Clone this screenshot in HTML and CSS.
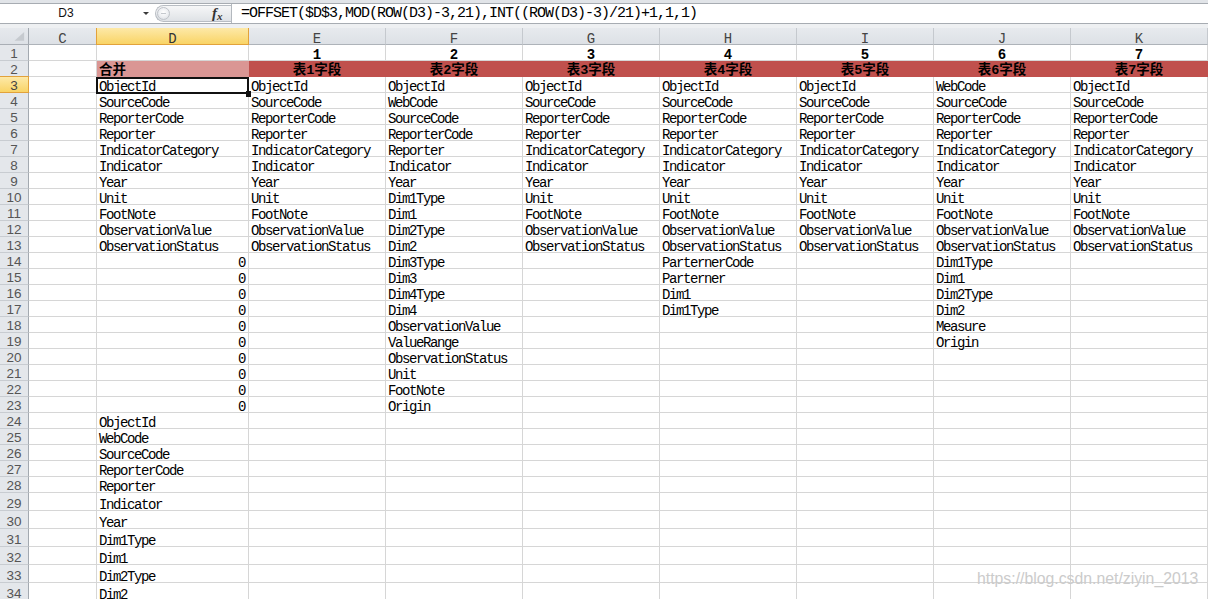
FILE: index.html
```html
<!DOCTYPE html>
<html lang="zh">
<head>
<meta charset="utf-8">
<title>Excel</title>
<link rel="stylesheet" href="styles.css">
</head>
<body>
<div class="app">
  <div class="topband"></div>
  <div class="fbar">
    <div class="namebox"><span class="name">D3</span><span class="arrow"></span></div>
    <div class="pill"><span class="knob"><span class="dash"></span></span><span class="fx">f<span class="fxx">x</span></span></div>
    <div class="formula">=OFFSET($D$3,MOD(ROW(D3)-3,21),INT((ROW(D3)-3)/21)+1,1,1)</div>
  </div>
  <div class="gap"></div>
  <div class="sheet">
    <span class="corner"><svg width="29" height="17" viewBox="0 0 29 17"><polygon points="25,5 25,14 15,14" fill="#c6cacf"/></svg></span><span class="ch">C</span><span class="ch sel">D</span><span class="ch">E</span><span class="ch">F</span><span class="ch">G</span><span class="ch">H</span><span class="ch">I</span><span class="ch">J</span><span class="ch">K</span>

    <span class="rh">1</span><span class="c"></span><span class="c"></span><span class="c num">1</span><span class="c num">2</span><span class="c num">3</span><span class="c num">4</span><span class="c num">5</span><span class="c num">6</span><span class="c num">7</span>

    <span class="rh">2</span><span class="c"></span><span class="c cjk pink">合并</span><span class="c cjk red">表1字段</span><span class="c cjk red">表2字段</span><span class="c cjk red">表3字段</span><span class="c cjk red">表4字段</span><span class="c cjk red">表5字段</span><span class="c cjk red">表6字段</span><span class="c cjk red">表7字段</span>

    <span class="rh rsel">3</span><span class="c"></span><span class="c act">ObjectId</span><span class="c">ObjectId</span><span class="c">ObjectId</span><span class="c">ObjectId</span><span class="c">ObjectId</span><span class="c">ObjectId</span><span class="c">WebCode</span><span class="c">ObjectId</span>

    <span class="rh">4</span><span class="c"></span><span class="c">SourceCode</span><span class="c">SourceCode</span><span class="c">WebCode</span><span class="c">SourceCode</span><span class="c">SourceCode</span><span class="c">SourceCode</span><span class="c">SourceCode</span><span class="c">SourceCode</span>

    <span class="rh">5</span><span class="c"></span><span class="c">ReporterCode</span><span class="c">ReporterCode</span><span class="c">SourceCode</span><span class="c">ReporterCode</span><span class="c">ReporterCode</span><span class="c">ReporterCode</span><span class="c">ReporterCode</span><span class="c">ReporterCode</span>

    <span class="rh">6</span><span class="c"></span><span class="c">Reporter</span><span class="c">Reporter</span><span class="c">ReporterCode</span><span class="c">Reporter</span><span class="c">Reporter</span><span class="c">Reporter</span><span class="c">Reporter</span><span class="c">Reporter</span>

    <span class="rh">7</span><span class="c"></span><span class="c">IndicatorCategory</span><span class="c">IndicatorCategory</span><span class="c">Reporter</span><span class="c">IndicatorCategory</span><span class="c">IndicatorCategory</span><span class="c">IndicatorCategory</span><span class="c">IndicatorCategory</span><span class="c">IndicatorCategory</span>

    <span class="rh">8</span><span class="c"></span><span class="c">Indicator</span><span class="c">Indicator</span><span class="c">Indicator</span><span class="c">Indicator</span><span class="c">Indicator</span><span class="c">Indicator</span><span class="c">Indicator</span><span class="c">Indicator</span>

    <span class="rh">9</span><span class="c"></span><span class="c">Year</span><span class="c">Year</span><span class="c">Year</span><span class="c">Year</span><span class="c">Year</span><span class="c">Year</span><span class="c">Year</span><span class="c">Year</span>

    <span class="rh">10</span><span class="c"></span><span class="c">Unit</span><span class="c">Unit</span><span class="c">Dim1Type</span><span class="c">Unit</span><span class="c">Unit</span><span class="c">Unit</span><span class="c">Unit</span><span class="c">Unit</span>

    <span class="rh">11</span><span class="c"></span><span class="c">FootNote</span><span class="c">FootNote</span><span class="c">Dim1</span><span class="c">FootNote</span><span class="c">FootNote</span><span class="c">FootNote</span><span class="c">FootNote</span><span class="c">FootNote</span>

    <span class="rh">12</span><span class="c"></span><span class="c">ObservationValue</span><span class="c">ObservationValue</span><span class="c">Dim2Type</span><span class="c">ObservationValue</span><span class="c">ObservationValue</span><span class="c">ObservationValue</span><span class="c">ObservationValue</span><span class="c">ObservationValue</span>

    <span class="rh">13</span><span class="c"></span><span class="c">ObservationStatus</span><span class="c">ObservationStatus</span><span class="c">Dim2</span><span class="c">ObservationStatus</span><span class="c">ObservationStatus</span><span class="c">ObservationStatus</span><span class="c">ObservationStatus</span><span class="c">ObservationStatus</span>

    <span class="rh">14</span><span class="c"></span><span class="c n">0</span><span class="c"></span><span class="c">Dim3Type</span><span class="c"></span><span class="c">ParternerCode</span><span class="c"></span><span class="c">Dim1Type</span><span class="c"></span>

    <span class="rh">15</span><span class="c"></span><span class="c n">0</span><span class="c"></span><span class="c">Dim3</span><span class="c"></span><span class="c">Parterner</span><span class="c"></span><span class="c">Dim1</span><span class="c"></span>

    <span class="rh">16</span><span class="c"></span><span class="c n">0</span><span class="c"></span><span class="c">Dim4Type</span><span class="c"></span><span class="c">Dim1</span><span class="c"></span><span class="c">Dim2Type</span><span class="c"></span>

    <span class="rh">17</span><span class="c"></span><span class="c n">0</span><span class="c"></span><span class="c">Dim4</span><span class="c"></span><span class="c">Dim1Type</span><span class="c"></span><span class="c">Dim2</span><span class="c"></span>

    <span class="rh">18</span><span class="c"></span><span class="c n">0</span><span class="c"></span><span class="c">ObservationValue</span><span class="c"></span><span class="c"></span><span class="c"></span><span class="c">Measure</span><span class="c"></span>

    <span class="rh">19</span><span class="c"></span><span class="c n">0</span><span class="c"></span><span class="c">ValueRange</span><span class="c"></span><span class="c"></span><span class="c"></span><span class="c">Origin</span><span class="c"></span>

    <span class="rh">20</span><span class="c"></span><span class="c n">0</span><span class="c"></span><span class="c">ObservationStatus</span><span class="c"></span><span class="c"></span><span class="c"></span><span class="c"></span><span class="c"></span>

    <span class="rh">21</span><span class="c"></span><span class="c n">0</span><span class="c"></span><span class="c">Unit</span><span class="c"></span><span class="c"></span><span class="c"></span><span class="c"></span><span class="c"></span>

    <span class="rh">22</span><span class="c"></span><span class="c n">0</span><span class="c"></span><span class="c">FootNote</span><span class="c"></span><span class="c"></span><span class="c"></span><span class="c"></span><span class="c"></span>

    <span class="rh">23</span><span class="c"></span><span class="c n">0</span><span class="c"></span><span class="c">Origin</span><span class="c"></span><span class="c"></span><span class="c"></span><span class="c"></span><span class="c"></span>

    <span class="rh">24</span><span class="c"></span><span class="c">ObjectId</span><span class="c"></span><span class="c"></span><span class="c"></span><span class="c"></span><span class="c"></span><span class="c"></span><span class="c"></span>

    <span class="rh">25</span><span class="c"></span><span class="c">WebCode</span><span class="c"></span><span class="c"></span><span class="c"></span><span class="c"></span><span class="c"></span><span class="c"></span><span class="c"></span>

    <span class="rh">26</span><span class="c"></span><span class="c">SourceCode</span><span class="c"></span><span class="c"></span><span class="c"></span><span class="c"></span><span class="c"></span><span class="c"></span><span class="c"></span>

    <span class="rh">27</span><span class="c"></span><span class="c">ReporterCode</span><span class="c"></span><span class="c"></span><span class="c"></span><span class="c"></span><span class="c"></span><span class="c"></span><span class="c"></span>

    <span class="rh">28</span><span class="c"></span><span class="c">Reporter</span><span class="c"></span><span class="c"></span><span class="c"></span><span class="c"></span><span class="c"></span><span class="c"></span><span class="c"></span>

    <span class="rh">29</span><span class="c"></span><span class="c">Indicator</span><span class="c"></span><span class="c"></span><span class="c"></span><span class="c"></span><span class="c"></span><span class="c"></span><span class="c"></span>

    <span class="rh">30</span><span class="c"></span><span class="c">Year</span><span class="c"></span><span class="c"></span><span class="c"></span><span class="c"></span><span class="c"></span><span class="c"></span><span class="c"></span>

    <span class="rh">31</span><span class="c"></span><span class="c">Dim1Type</span><span class="c"></span><span class="c"></span><span class="c"></span><span class="c"></span><span class="c"></span><span class="c"></span><span class="c"></span>

    <span class="rh">32</span><span class="c"></span><span class="c">Dim1</span><span class="c"></span><span class="c"></span><span class="c"></span><span class="c"></span><span class="c"></span><span class="c"></span><span class="c"></span>

    <span class="rh">33</span><span class="c"></span><span class="c">Dim2Type</span><span class="c"></span><span class="c"></span><span class="c"></span><span class="c"></span><span class="c"></span><span class="c"></span><span class="c"></span>

    <span class="rh">34</span><span class="c"></span><span class="c">Dim2</span><span class="c"></span><span class="c"></span><span class="c"></span><span class="c"></span><span class="c"></span><span class="c"></span><span class="c"></span>
  </div>
  <div class="watermark">https://blog.csdn.net/ziyin_2013</div>
</div>
</body>
</html>
```

FILE: styles.css
```css
html, body {
  margin: 0;
  padding: 0;
  background: #fff;
  overflow: hidden;
}

.app {
  position: relative;
  width: 1208px;
  height: 599px;
  overflow: hidden;
  font-family: "Liberation Mono", "Courier New", monospace;
  color: #000;
}

.topband {
  height: 3px;
  background: #e1e4e8;
}

.fbar {
  height: 21px;
  box-sizing: border-box;
  border-top: 1px solid #a7acb2;
  border-bottom: 1px solid #a7acb2;
  display: flex;
  background: #fff;
}

.namebox {
  width: 155px;
  display: flex;
  align-items: center;
}

.name {
  width: 132px;
  text-align: center;
  font-family: "Liberation Sans", Arial, sans-serif;
  font-size: 12px;
  line-height: 19px;
  color: #111;
}

.arrow {
  margin-left: 11px;
  width: 0;
  height: 0;
  border-left: 3px solid transparent;
  border-right: 3px solid transparent;
  border-top: 3px solid #3a3a3a;
}

.pill {
  width: 76px;
  box-sizing: border-box;
  margin: 1px 0 1px 0;
  border: 1px solid #b8bdc3;
  border-right: none;
  border-radius: 9px 0 0 9px;
  background: linear-gradient(#f6f7f8, #dfe2e6);
  display: flex;
  align-items: center;
}

.knob {
  width: 13px;
  height: 13px;
  margin-left: 1px;
  box-sizing: border-box;
  border: 1px solid #bfc3c9;
  border-radius: 50%;
  background: radial-gradient(circle at 50% 40%, #ffffff 0%, #eceef1 55%, #d3d7dc 100%);
  display: flex;
  align-items: center;
  justify-content: center;
}

.dash {
  width: 5px;
  height: 1px;
  background: #c4c8cd;
}

.fx {
  margin-left: 42px;
  font-family: "Liberation Serif", serif;
  font-style: italic;
  font-weight: bold;
  font-size: 15px;
  line-height: 15px;
  color: #333;
}

.fxx {
  font-size: 11px;
  position: relative;
  top: 2px;
}

.formula {
  flex: 1;
  border-left: 1px solid #b3b8be;
  padding-left: 9px;
  padding-top: 1px;
  font-size: 15px;
  letter-spacing: -1px;
  line-height: 18px;
  white-space: nowrap;
  color: #000;
}

.gap {
  height: 4px;
  background: #eef0f2;
}

.sheet {
  display: grid;
  grid-template-columns: 29px 68px 152px repeat(7, 137px);
  grid-template-rows: 17px repeat(28, 16px) repeat(6, 18px);
}

.sheet > span {
  box-sizing: border-box;
  display: flex;
  align-items: flex-end;
  white-space: nowrap;
  min-width: 0;
}

.corner {
  background: linear-gradient(#e6e9ed, #dde1e6);
  border-right: 1px solid #a3a9b0;
  border-bottom: 1px solid #a9aeb5;
}

.ch {
  justify-content: center;
  background: linear-gradient(#e7eaee, #dde1e6);
  border-right: 1px solid #c5c9ce;
  border-bottom: 1px solid #aeb3b9;
  font-size: 14px;
  line-height: 10px;
  color: #444;
}

.ch.sel {
  background: linear-gradient(#fde9a8, #f9d466);
  border-right-color: #e2a23b;
  border-bottom-color: #e2a23b;
  box-shadow: -1px 0 0 #e2a23b;
  color: #333;
}

.rh {
  justify-content: center;
  background: #e4e7eb;
  border-right: 1px solid #a3a9b0;
  border-bottom: 1px solid #c8ccd1;
  font-family: "Liberation Sans", Arial, sans-serif;
  font-size: 13.5px;
  line-height: 13px;
  color: #555;
}

.rh.rsel {
  background: linear-gradient(#fde9a8, #f9d466);
  border-right-color: #e2a23b;
  border-bottom-color: #e2a23b;
  box-shadow: 0 -1px 0 #e2a23b;
  color: #444;
}

.c {
  border-right: 1px solid #d6d6d6;
  border-bottom: 1px solid #d6d6d6;
  padding: 0 2px;
  font-size: 14px;
  line-height: 10px;
  letter-spacing: -1.4px;
  color: #000;
}

.c.n {
  justify-content: flex-end;
  padding-right: 3px;
}

.c.num {
  justify-content: center;
  font-weight: bold;
  letter-spacing: 0;
}

.c.cjk {
  font-family: "Liberation Mono", "Noto Sans CJK SC", monospace;
  font-weight: bold;
  font-size: 13.5px;
  line-height: 10px;
  letter-spacing: 0;
}

.c.pink {
  background: #da9694;
  border-right-color: #da9694;
  border-bottom-color: #da9694;
}

.c.red {
  justify-content: center;
  background: #c0504d;
  border-right-color: #c0504d;
  border-bottom-color: #c0504d;
}

.c.act {
  position: relative;
}

.c.act::after {
  content: "";
  position: absolute;
  left: -1px;
  top: 0;
  width: 153px;
  height: 17px;
  box-sizing: border-box;
  border: 2px solid #111;
}

.c.act::before {
  content: "";
  position: absolute;
  left: 149px;
  top: 14px;
  width: 5px;
  height: 6px;
  background: #111;
  z-index: 2;
}

.watermark {
  position: absolute;
  left: 977px;
  top: 570px;
  font-family: "Liberation Sans", Arial, sans-serif;
  font-size: 15.8px;
  line-height: 18px;
  color: #cbcbcb;
  white-space: nowrap;
}
```
